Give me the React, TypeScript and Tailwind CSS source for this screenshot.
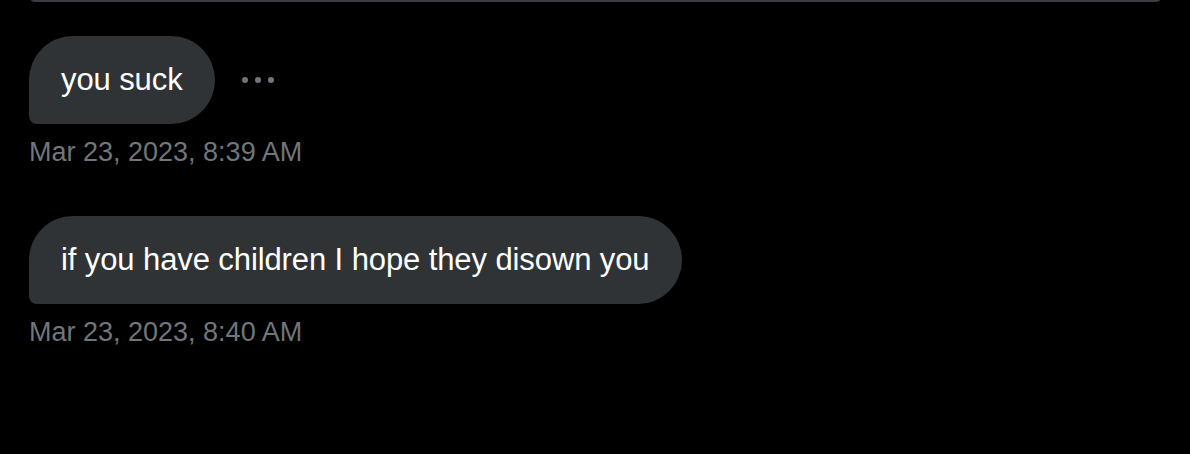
import React from 'react';

interface Message {
  text: string;
  time: string;
  showMore?: boolean;
}

const messages: Message[] = [
  { text: 'you suck', time: 'Mar 23, 2023, 8:39 AM', showMore: true },
  { text: 'if you have children I hope they disown you', time: 'Mar 23, 2023, 8:40 AM' },
];

export default function App() {
  return (
    <div className="w-[1190px] h-[454px] bg-black overflow-hidden font-['Liberation_Sans',Arial,sans-serif]">
      {/* bottom edge of the box above */}
      <div className="mx-[29px] w-[1133px] h-[20px] -mt-[18px] border-2 border-[#3a3d41] rounded-[6px]" />

      <div className="pl-[29px] pt-[34px] flex flex-col">
        {messages.map((m, i) => (
          <div key={i} className={i === 0 ? '' : 'mt-[48px]'}>
            <div className="flex items-center">
              <div className="bg-[#2f3336] text-white text-[31px] leading-[40px] px-[32px] py-[24px] rounded-[44px] rounded-bl-[8px] tracking-[-0.1px]">
                {m.text}
              </div>
              {m.showMore && (
                <div className="ml-[27px] flex gap-[7px] items-center">
                  <span className="w-[6px] h-[6px] rounded-full bg-[#71767b]" />
                  <span className="w-[6px] h-[6px] rounded-full bg-[#71767b]" />
                  <span className="w-[6px] h-[6px] rounded-full bg-[#71767b]" />
                </div>
              )}
            </div>
            <div className="mt-[12px] text-[#71767b] text-[27px] leading-[32px]">{m.time}</div>
          </div>
        ))}
      </div>
    </div>
  );
}
